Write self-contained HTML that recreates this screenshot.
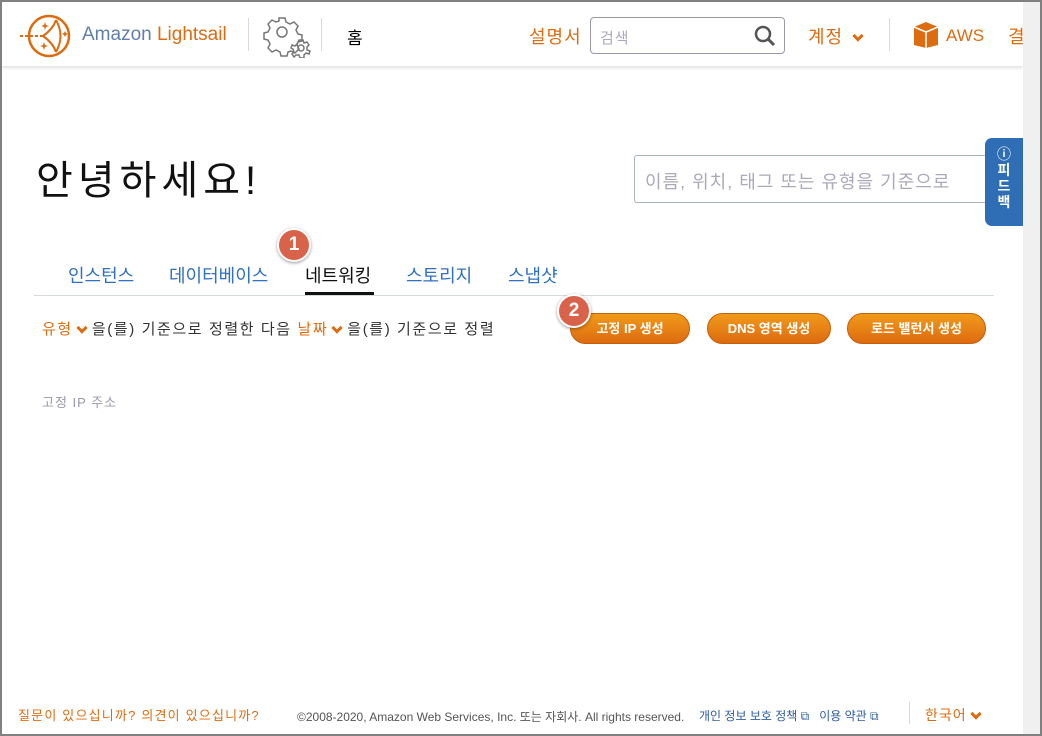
<!DOCTYPE html>
<html><head><meta charset="utf-8"><style>
*{box-sizing:border-box;margin:0;padding:0}
body{width:1042px;height:736px;overflow:hidden;background:#808080;font-family:"Liberation Sans","Noto Sans CJK KR",sans-serif;position:relative}
#win{position:absolute;left:2px;top:2px;width:1038px;height:732px;background:#fff;overflow:hidden}
#sb{position:absolute;left:1021px;top:0;width:17px;height:732px;background:#f0f0f0}
.hdr{position:absolute;left:0;top:0;width:1021px;height:64px;background:#fff;box-shadow:0 2px 3px rgba(0,0,0,.12)}
.abs{position:absolute;white-space:nowrap}
.or{color:#dd6b10}
.vsep{position:absolute;width:1px;background:#d5dbdb}
.btn{position:absolute;top:311px;height:31px;border-radius:16px;background:linear-gradient(#f19a1a,#dd6b10);border:1px solid #c45f0c;color:#fff;font-size:13px;font-weight:bold;text-align:center;line-height:29px}
.badge{position:absolute;width:34px;height:34px;border-radius:50%;background:#d9634a;border:2px solid #fff;box-shadow:0 1px 3px rgba(0,0,0,.4);color:#fff;font-weight:bold;font-size:19px;text-align:center;line-height:30px}
.tab{position:absolute;top:260px;font-size:18px;color:#2f70c0}
.dn{display:inline-block;width:8px;height:8px;border-right:3px solid #dd6b10;border-bottom:3px solid #dd6b10;transform:rotate(45deg);margin:0 6px 4px 5px;vertical-align:middle}
</style></head><body><div id="win">
<div class="hdr">
<svg class="abs" style="left:17px;top:12px" width="54" height="46" viewBox="0 0 54 46"><circle cx="30" cy="22" r="20" fill="none" stroke="#dd6b10" stroke-width="2.5"/><path d="M24 22 Q34 15 37 6 M24 22 Q34 29 37 38 M37 6 Q46 22 37 38" fill="none" stroke="#dd6b10" stroke-width="2"/><path d="M1 22H24" stroke="#dd6b10" stroke-width="2" stroke-dasharray="3 2"/><path d="M26 8l1 3 3 1-3 1-1 3-1-3-3-1 3-1zM25 28l1 3 3 1-3 1-1 3-1-3-3-1 3-1zM46 17l1 2 2 1-2 1-1 2-1-2-2-1 2-1z" fill="#dd6b10"/></svg>
<div class="abs" style="left:80px;top:22px;font-size:19px;color:#5f7fa8">Amazon <span class="or">Lightsail</span></div>
<div class="vsep" style="left:246px;top:16px;height:33px"></div>
<svg class="abs" style="left:260px;top:10px" width="50" height="46" viewBox="0 0 50 46"><g fill="none" stroke="#777" stroke-width="1.5"><circle cx="20" cy="20" r="5"/><path d="M17 6h6l1 4 4 2 4-2 4 4-2 4 2 4 4 1v6l-4 1-1 3 2 4-4 4-4-2-3 1-1 4h-6l-1-4-4-2-4 2-4-4 2-4-2-4-4-1v-6l4-1 2-4-2-4 4-4 4 2 3-1z"/><circle cx="39" cy="36" r="3"/><path d="M37 28h4l1 3 3-1 2 3-2 2 0 3 3 1-1 3-3-1-2 2v3h-4l-1-3-3 0-2 2-2-3 2-2-1-3-2-1 1-3 3 1 2-2z"/></g></svg>
<div class="vsep" style="left:319px;top:16px;height:33px"></div>
<div class="abs" style="left:345px;top:22px;font-size:17px;color:#000">홈</div>
<div class="abs or" style="left:527px;top:21px;font-size:18px;letter-spacing:1px">설명서</div>
<div class="abs" style="left:588px;top:15px;width:195px;height:37px;border:1px solid #99a;border-radius:4px"><span class="abs" style="left:9px;top:9px;font-size:15px;color:#aab;letter-spacing:1px">검색</span><svg class="abs" style="left:162px;top:6px" width="24" height="24" viewBox="0 0 24 24"><circle cx="10" cy="10" r="7" fill="none" stroke="#555" stroke-width="2.5"/><path d="M15 15l6 6" stroke="#555" stroke-width="3"/></svg></div>
<div class="abs or" style="left:806px;top:21px;font-size:18px;letter-spacing:1px">계정 <span class="dn"></span></div>
<div class="vsep" style="left:887px;top:16px;height:33px"></div>
<svg class="abs" style="left:911px;top:19px" width="26" height="28" viewBox="0 0 26 28"><path d="M13 1L25 6V24L13 27L1 24V6Z" fill="#dd6b10"/><path d="M1 6L13 11L25 6M13 11V27" stroke="#fff" stroke-width="1.5" fill="none"/></svg>
<div class="abs or" style="left:944px;top:24px;font-size:17px">AWS</div>
<div class="abs or" style="left:1006px;top:21px;font-size:18px">결</div>
</div>
<div class="abs" style="left:34px;top:146px;font-size:40px;color:#111;letter-spacing:5px">안녕하세요!</div>
<div class="abs" style="left:632px;top:153px;width:400px;height:48px;border:1px solid #aab7b8;border-radius:3px"><span class="abs" style="left:10px;top:12px;font-size:18px;color:#aab;letter-spacing:1px">이름, 위치, 태그 또는 유형을 기준으로</span></div>
<div class="abs" style="left:983px;top:136px;width:38px;height:88px;background:#2f6eb5;border-radius:7px 0 0 7px;color:#fff;text-align:center;font-size:14px;font-weight:bold;line-height:16px;padding-top:8px">&#9432;<br>피<br>드<br>백</div>
<div class="tab" style="left:66px">인스턴스</div>
<div class="tab" style="left:167px">데이터베이스</div>
<div class="tab" style="left:303px;color:#111">네트워킹</div>
<div class="abs" style="left:303px;top:290px;width:69px;height:3px;background:#111"></div>
<div class="tab" style="left:404px">스토리지</div>
<div class="tab" style="left:506px">스냅샷</div>
<div class="abs" style="left:32px;top:293px;width:960px;height:1px;background:#d5dbdb"></div>
<div class="abs" style="left:40px;top:316px;font-size:15px;color:#333;letter-spacing:1.6px"><span class="or">유형<span class="dn"></span></span>을(를) 기준으로 정렬한 다음 <span class="or">날짜<span class="dn"></span></span>을(를) 기준으로 정렬</div>
<div class="btn" style="left:568px;width:120px">고정 IP 생성</div>
<div class="btn" style="left:705px;width:124px">DNS 영역 생성</div>
<div class="btn" style="left:845px;width:139px">로드 밸런서 생성</div>
<div class="badge" style="left:275px;top:226px">1</div>
<div class="badge" style="left:555px;top:292px">2</div>
<div class="abs" style="left:40px;top:390px;font-size:13px;color:#99a;letter-spacing:1px">고정 IP 주소</div>
<div class="abs or" style="left:16px;top:703px;font-size:13px;letter-spacing:1.2px">질문이 있으십니까? 의견이 있으십니까?</div>
<div class="abs" style="left:295px;top:706px;font-size:12px;color:#555">©2008-2020, Amazon Web Services, Inc. 또는 자회사. All rights reserved.</div>
<div class="abs" style="left:697px;top:705px;font-size:12px;color:#2f5da0">개인 정보 보호 정책 ⧉ &nbsp; 이용 약관 ⧉</div>
<div class="vsep" style="left:907px;top:700px;height:22px"></div>
<div class="abs or" style="left:923px;top:703px;font-size:14px;letter-spacing:1px">한국어<span class="dn"></span></div>
<div id="sb"></div>
</div></body></html>
